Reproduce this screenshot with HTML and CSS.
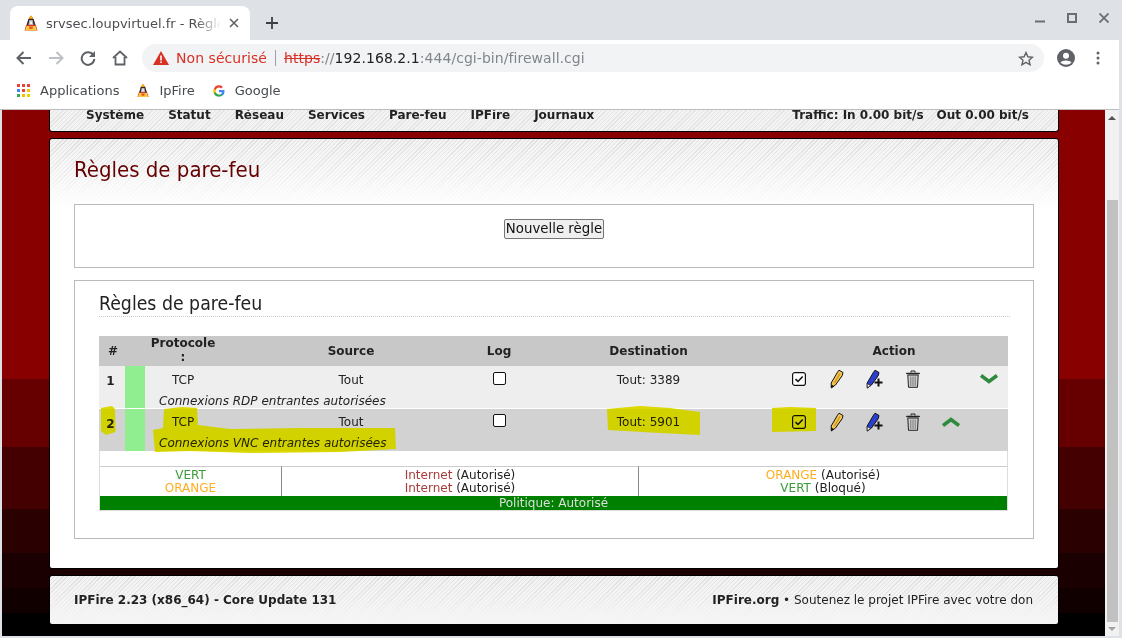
FILE: index.html
```html
<!DOCTYPE html>
<html lang="fr">
<head>
  <meta charset="UTF-8">
  <title>srvsec.loupvirtuel.fr - Règles de pare-feu</title>
  <link rel="stylesheet" href="styles.css">
</head>
<body>
  <svg class="defs" width="0" height="0">
    <symbol id="penguin" viewBox="0 0 14 16">
      <path d="M7 .5 9 3 10.500 7 12.500 12 13.500 15.500H.5L1.500 12 3.500 7 5 3Z" fill="#d8321c"/>
      <path d="M7 .5 9 3.500H5Z" fill="#f5c400"/>
      <path d="M4.300 4h5.400L11 10H3Z" fill="#2b2b30"/>
      <path d="M5.300 5h3.400L9.500 10H4.500Z" fill="#b9b8bc"/>
      <path d="M6 6.500h2V9H6Z" fill="#f6f3ee"/>
      <path d="M2.500 11h9L13 15.500H1Z" fill="#f6c744"/>
      <path d="M5 11.500h4L8.500 14h-3Z" fill="#e8541c"/>
    </symbol>
    <symbol id="pencil" viewBox="0 0 14 20">
      <path d="M9 1.200 13 3.500 12.300 6.500 5.500 16 1.300 19 1.200 14 7.500 3.200Z" fill="#f3c552" stroke="#111" stroke-width="1"/>
      <path d="M1.300 19 1.200 15.500 4 17Z" fill="#111"/>
      <path d="M10 4.500 4.500 14" stroke="#d2951f" stroke-width="1.400"/>
    </symbol>
    <symbol id="pencil-add" viewBox="0 0 18 20">
      <path d="M9 1.200 13 3.500 12.300 6.500 5.500 16 1.300 19 1.200 14 7.500 3.200Z" fill="#2a3fd0" stroke="#111" stroke-width="1"/>
      <path d="M1.300 19 1.200 14.500 4.500 16.500Z" fill="#fff" stroke="#111" stroke-width=".7"/>
      <path d="M12.500 9.500v8M8.500 13.500h8" stroke="#111" stroke-width="2"/>
    </symbol>
    <symbol id="trash" viewBox="0 0 14 18">
      <path d="M5 2.500V1h4v1.500" fill="none" stroke="#222"/>
      <path d="M.8 3.500h12.400" stroke="#222" stroke-width="1.500" stroke-linecap="round"/>
      <path d="M1.800 5h10.400l-.7 12.300H2.500Z" fill="#cfcfcf" stroke="#222"/>
      <path d="M4.800 6.500v9.500M7 6.500v9.500M9.200 6.500v9.500" stroke="#777"/>
    </symbol>
    <symbol id="tick" viewBox="0 0 14 14">
      <rect x=".6" y=".6" width="12.800" height="12.800" rx="2" fill="none" stroke="#111" stroke-width="1.200"/>
      <path d="M3.500 7.200 6 9.500 10.700 4.500" fill="none" stroke="#111" stroke-width="1.600"/>
    </symbol>
  </svg>

  <div class="tabstrip">
    <div class="tab">
      <svg class="favicon" width="14" height="16"><use href="#penguin"/></svg>
      <span class="tab-title">srvsec.loupvirtuel.fr - Règles de pare-feu</span>
      <svg class="tab-close" width="10" height="10" viewBox="0 0 10 10"><path d="M1 1 9 9M9 1 1 9" stroke="#5f6368" stroke-width="1.600"/></svg>
    </div>
    <svg class="new-tab" width="12" height="12" viewBox="0 0 12 12"><path d="M6 0v12M0 6h12" stroke="#3c4043" stroke-width="1.800"/></svg>
    <div class="win-btns">
      <svg width="10" height="10" viewBox="0 0 10 10"><path d="M0 8.500h10" stroke="#6a6d72" stroke-width="2"/></svg>
      <svg width="10" height="10" viewBox="0 0 10 10"><rect x="1" y="1" width="8" height="8" fill="none" stroke="#6a6d72" stroke-width="2"/></svg>
      <svg width="10" height="10" viewBox="0 0 10 10"><path d="M.5 .5l9 9M9.500 .5l-9 9" stroke="#6a6d72" stroke-width="1.800"/></svg>
    </div>
  </div>

  <div class="toolbar">
    <svg class="nav-icon" width="16" height="14" viewBox="0 0 16 14"><path d="M15 7H2M7.500 1 1.500 7l6 6" fill="none" stroke="#5f6368" stroke-width="2"/></svg>
    <svg class="nav-icon" width="16" height="14" viewBox="0 0 16 14"><path d="M1 7h13M8.500 1l6 6-6 6" fill="none" stroke="#bdc1c6" stroke-width="2"/></svg>
    <svg class="nav-icon" width="16" height="16" viewBox="0 0 16 16"><path d="M13.500 5.500A6.300 6.300 0 1 0 14.300 9" fill="none" stroke="#5f6368" stroke-width="2"/><path d="M15 1v6H9Z" fill="#5f6368"/></svg>
    <svg class="nav-icon" width="16" height="16" viewBox="0 0 16 16"><path d="M1 8 8 1.500 15 8M3.500 7v7.500h9V7" fill="none" stroke="#5f6368" stroke-width="1.800"/></svg>
    <div class="omnibox">
      <svg width="16" height="14" viewBox="0 0 16 14"><path d="M8 0 16 14H0Z" fill="#d93025"/><path d="M7.200 4.500h1.600v5H7.200ZM7.200 10.500h1.600V12H7.200Z" fill="#fff"/></svg>
      <span class="not-secure">Non sécurisé</span>
      <span class="omni-sep"></span>
      <span class="url"><s class="scheme">https</s>://<b class="host">192.168.2.1</b>:444/cgi-bin/firewall.cgi</span>
      <svg class="star" width="16" height="15" viewBox="0 0 16 15"><path d="M8 1.500 9.900 5.800 14.500 6.200 11 9.300 12.100 13.800 8 11.400 3.900 13.800 5 9.300 1.500 6.200 6.100 5.800Z" fill="none" stroke="#5f6368" stroke-width="1.400"/></svg>
    </div>
    <svg class="avatar" width="18" height="18" viewBox="0 0 18 18"><circle cx="9" cy="9" r="9" fill="#5f6368"/><circle cx="9" cy="6.800" r="3" fill="#fff"/><path d="M3.500 13.500C5 10.800 13 10.800 14.500 13.500 11.500 16.500 6.500 16.500 3.500 13.500Z" fill="#fff"/></svg>
    <svg class="kebab" width="4" height="14" viewBox="0 0 4 14"><circle cx="2" cy="2" r="1.500" fill="#5f6368"/><circle cx="2" cy="7" r="1.500" fill="#5f6368"/><circle cx="2" cy="12" r="1.500" fill="#5f6368"/></svg>
  </div>

  <div class="bookmarks">
    <div class="bookmark apps">
      <svg width="13" height="13" viewBox="0 0 13 13">
        <rect width="3" height="3" fill="#ea4335"/><rect x="5" width="3" height="3" fill="#ea4335"/><rect x="10" width="3" height="3" fill="#ea4335"/>
        <rect y="5" width="3" height="3" fill="#4285f4"/><rect x="5" y="5" width="3" height="3" fill="#ea4335"/><rect x="10" y="5" width="3" height="3" fill="#fbbc05"/>
        <rect y="10" width="3" height="3" fill="#34a853"/><rect x="5" y="10" width="3" height="3" fill="#fbbc05"/><rect x="10" y="10" width="3" height="3" fill="#e0d800"/>
      </svg>
      <span>Applications</span>
    </div>
    <div class="bookmark fire">
      <svg width="12" height="15"><use href="#penguin"/></svg>
      <span>IpFire</span>
    </div>
    <div class="bookmark google">
      <svg width="12" height="12" viewBox="0 0 48 48">
        <path d="M46 24.500c0-1.600-.1-3.100-.4-4.500H24v8.500h12.400c-.5 2.900-2.100 5.300-4.600 7v5.800h7.400C43.500 37.800 46 31.700 46 24.500Z" fill="#4285f4"/>
        <path d="M24 47c6.200 0 11.400-2 15.200-5.600l-7.400-5.800c-2 1.400-4.700 2.200-7.800 2.200-6 0-11-4-12.900-9.500H3.500v6A23 23 0 0 0 24 47Z" fill="#34a853"/>
        <path d="M11.100 28.300a13.800 13.800 0 0 1 0-8.700v-6H3.500a23 23 0 0 0 0 20.600Z" fill="#fbbc05"/>
        <path d="M24 10.100c3.400 0 6.400 1.200 8.800 3.400l6.600-6.600A23 23 0 0 0 3.500 13.600l7.600 6C13 14.100 18 10.100 24 10.100Z" fill="#ea4335"/>
      </svg>
      <span>Google</span>
    </div>
  </div>

  <div class="viewport">
    <div class="page">
      <div class="card nav-card">
        <ul class="menu">
          <li>Système</li>
          <li>Statut</li>
          <li>Réseau</li>
          <li>Services</li>
          <li>Pare-feu</li>
          <li>IPFire</li>
          <li>Journaux</li>
        </ul>
        <div class="traffic"><span>Traffic: In 0.00 bit/s</span><span>Out 0.00 bit/s</span></div>
      </div>

      <div class="card main-card">
        <h1>Règles de pare-feu</h1>
        <div class="box new-rule"><button type="button">Nouvelle règle</button></div>
        <div class="box rules-box">
          <h2>Règles de pare-feu</h2>
          <div class="rules-wrap">
            <table class="rules">
              <colgroup>
                <col class="c-num"><col class="c-color"><col class="c-proto"><col class="c-src"><col class="c-log"><col class="c-dst">
                <col class="c-act"><col class="c-act"><col class="c-act"><col class="c-act"><col class="c-act"><col class="c-act">
              </colgroup>
              <thead>
                <tr>
                  <th>#</th>
                  <th></th>
                  <th>Protocole<br>:</th>
                  <th>Source</th>
                  <th>Log</th>
                  <th>Destination</th>
                  <th colspan="6">Action</th>
                </tr>
              </thead>
              <tbody>
                <tr class="row-a">
                  <td class="num" rowspan="2">1</td>
                  <td class="zone" rowspan="2"></td>
                  <td>TCP</td>
                  <td>Tout</td>
                  <td><span class="check"></span></td>
                  <td>Tout: 3389</td>
                  <td><svg class="ic-tick" width="14" height="14"><use href="#tick"/></svg></td>
                  <td><svg width="14" height="20"><use href="#pencil"/></svg></td>
                  <td><svg width="18" height="20"><use href="#pencil-add"/></svg></td>
                  <td><svg width="14" height="18"><use href="#trash"/></svg></td>
                  <td></td>
                  <td><svg width="18" height="10" viewBox="0 0 18 10"><path d="M1 1.500 9 7.500 17 1.500" fill="none" stroke="#2e8b3d" stroke-width="3.600"/></svg></td>
                </tr>
                <tr class="row-a note-row">
                  <td class="note" colspan="10">Connexions RDP entrantes autorisées</td>
                </tr>
                <tr class="row-b">
                  <td class="num" rowspan="2">2</td>
                  <td class="zone" rowspan="2"></td>
                  <td>TCP</td>
                  <td>Tout</td>
                  <td><span class="check"></span></td>
                  <td>Tout: 5901</td>
                  <td><svg class="ic-tick" width="14" height="14"><use href="#tick"/></svg></td>
                  <td><svg width="14" height="20"><use href="#pencil"/></svg></td>
                  <td><svg width="18" height="20"><use href="#pencil-add"/></svg></td>
                  <td><svg width="14" height="18"><use href="#trash"/></svg></td>
                  <td><svg width="18" height="10" viewBox="0 0 18 10"><path d="M1 8.500 9 2.500 17 8.500" fill="none" stroke="#2e8b3d" stroke-width="3.600"/></svg></td>
                  <td></td>
                </tr>
                <tr class="row-b note-row">
                  <td class="note" colspan="10">Connexions VNC entrantes autorisées</td>
                </tr>
              </tbody>
            </table>

            <div class="gap"></div>

            <table class="summary">
              <colgroup><col class="s1"><col class="s2"><col class="s3"></colgroup>
              <tr>
                <td><span class="green">VERT</span><br><span class="orange">ORANGE</span></td>
                <td><span class="red">Internet</span> (Autorisé)<br><span class="red">Internet</span> (Autorisé)</td>
                <td><span class="orange">ORANGE</span> (Autorisé)<br><span class="green">VERT</span> (Bloqué)</td>
              </tr>
              <tr><td class="policy" colspan="3">Politique: Autorisé</td></tr>
            </table>

            <!-- marker strokes drawn on the screenshot, coordinates are page px -->
            <svg class="marker" width="909" height="130" viewBox="99 336 909 130">
              <path d="M101 408 112 406 115 409 115.500 432 106 435 101 431Z"/>
              <path d="M164 409 182 407 197 408 198 425 230 429 300 428 395 428 396 449 340 452 250 453 190 451 155 452 153 430 163 428Z"/>
              <path d="M607 409 640 406 670 408 700 412 700 435 660 433 625 431 608 430Z"/>
              <path d="M772 408 790 407 816 408 816 431 772 432Z"/>
            </svg>
          </div>
        </div>
      </div>

      <div class="card foot-card">
        <b>IPFire 2.23 (x86_64) - Core Update 131</b>
        <span><b>IPFire.org</b> • Soutenez le projet IPFire avec votre don</span>
      </div>
    </div>

    <div class="scrollbar">
      <span class="arrow-up"></span>
      <div class="track"><div class="thumb"></div></div>
      <span class="arrow-down"></span>
    </div>
  </div>
</body>
</html>
```

FILE: styles.css
```css
* {
  box-sizing: border-box;
}
html, body {
  margin: 0;
  padding: 0;
  height: 100%;
  overflow: hidden;
}
body {
  width: 1122px;
  height: 638px;
  background: #dee1e6;
  font-family: "DejaVu Sans", sans-serif;
  font-size: 12px;
  color: #222;
  display: flex;
  flex-direction: column;
}
.defs {
  position: absolute;
}

/* browser chrome */
.tabstrip {
  height: 40px;
  flex: none;
  display: flex;
  align-items: flex-end;
  padding-left: 10px;
  position: relative;
}
.tab {
  width: 240px;
  height: 34px;
  background: #fff;
  border-radius: 8px 8px 0 0;
  display: flex;
  align-items: center;
  padding: 0 11px 0 14px;
}
.favicon {
  flex: none;
}
.tab-title {
  font-size: 13px;
  color: #4b4e52;
  margin-left: 8px;
  width: 175px;
  overflow: hidden;
  white-space: nowrap;
  -webkit-mask-image: linear-gradient(90deg, #000 150px, transparent 175px);
}
.tab-close {
  margin-left: auto;
}
.new-tab {
  margin: 0 0 11px 16px;
}
.win-btns {
  margin: 0 13px 17px auto;
  display: flex;
  gap: 22px;
}
.toolbar {
  height: 38px;
  flex: none;
  margin-right: 3px;
  background: #fff;
  display: flex;
  align-items: center;
  padding: 0 0 2px 16px;
}
.nav-icon {
  margin-right: 16px;
}
.omnibox {
  width: 902px;
  height: 28px;
  margin-left: -2px;
  background: #f1f3f4;
  border-radius: 14px;
  display: flex;
  align-items: center;
  padding: 0 10px 0 11px;
  font-size: 14px;
  letter-spacing: .05px;
  white-space: nowrap;
}
.not-secure {
  color: #d93025;
  margin-left: 7px;
}
.omni-sep {
  width: 1px;
  height: 16px;
  background: #9aa0a6;
  margin: 0 8px 0 8px;
}
.url {
  color: #80868b;
}
.scheme {
  color: #d93025;
}
.host {
  font-weight: normal;
  color: #202124;
}
.star {
  margin-left: auto;
}
.avatar {
  margin-left: 13px;
}
.kebab {
  margin-left: 21px;
}
.bookmarks {
  height: 32px;
  flex: none;
  margin-right: 3px;
  background: #fff;
  border-bottom: 1px solid #bdbdbd;
  display: flex;
  align-items: center;
  padding: 0 0 6px 17px;
  font-size: 13px;
  color: #46494d;
}
.bookmark {
  display: flex;
  align-items: center;
}
.apps span {
  margin-left: 10px;
}
.fire {
  margin-left: 18px;
}
.fire span {
  margin-left: 10px;
}
.google {
  margin-left: 18px;
}
.google span {
  margin-left: 10px;
}

/* page area */
.viewport {
  height: 526px;
  flex: none;
  margin: 0 3px 0 2px;
  display: flex;
  overflow: hidden;
}
.page {
  width: 1103px;
  height: 526px;
  padding-left: 47px;
  background: linear-gradient(180deg,
    #880000 0, #880000 269px,
    #660000 269px, #660000 337px,
    #440000 337px, #440000 399px,
    #2a0000 399px, #2a0000 443px,
    #1a0000 443px, #1a0000 478px,
    #100000 478px, #100000 503px,
    #000 503px, #000 526px);
}
.card {
  width: 1010px;
  border: 1px solid #000;
  border-radius: 3px;
}
.nav-card {
  height: 22px;
  border-top: 0;
  border-radius: 0 0 3px 3px;
  padding: 0 29px 0 36px;
  display: flex;
  justify-content: space-between;
  font-weight: bold;
  line-height: 10px;
  color: #222;
  background: repeating-linear-gradient(135deg, #e4e4e4 0 1px, #f3f3f3 1px 3px);
}
.menu {
  list-style: none;
  margin: 0;
  padding: 0;
  display: flex;
  gap: 24px;
}
.traffic {
  display: flex;
  gap: 13px;
}
.main-card {
  height: 431px;
  margin-top: 6px;
  padding: 0 24px;
  background:
    linear-gradient(180deg, rgba(255,255,255,0) 0, #fff 70px),
    repeating-linear-gradient(135deg, #dedede 0 1px, #f3f3f3 1px 3px);
}
h1 {
  margin: 0;
  padding-top: 18px;
  height: 65px;
  font-family: "DejaVu Sans Condensed", "DejaVu Sans", sans-serif;
  font-size: 22px;
  line-height: 26px;
  font-weight: normal;
  color: #660000;
}
.box {
  width: 960px;
  background: #fff;
  border: 1px solid #bbb;
}
.new-rule {
  height: 64px;
  padding-top: 14px;
  text-align: center;
}
.new-rule button {
  height: 20px;
  padding: 0 1px;
  font-family: "DejaVu Sans", sans-serif;
  font-size: 13.333px;
  line-height: 16px;
  color: #111;
  background: #efefef;
  border: 1px solid #767676;
  border-radius: 2px;
}
.rules-box {
  height: 259px;
  margin-top: 12px;
  padding: 0 23px 0 24px;
}
h2 {
  margin: 0;
  padding-top: 12px;
  height: 36px;
  font-family: "DejaVu Sans Condensed", "DejaVu Sans", sans-serif;
  font-size: 19.300px;
  line-height: 22px;
  font-weight: normal;
  color: #222;
  border-bottom: 1px dotted #ccc;
}
.rules-wrap {
  position: relative;
  margin-top: 19px;
  width: 909px;
}
table {
  border-collapse: separate;
  border-spacing: 0;
  table-layout: fixed;
  width: 909px;
}
.c-num { width: 26px; }
.c-color { width: 20px; }
.c-proto { width: 76px; }
.c-src { width: 260px; }
.c-log { width: 36px; }
.c-dst { width: 263px; }
.c-act { width: 38px; }
.rules th {
  height: 30px;
  padding: 0;
  background: #c8c8c8;
  font-size: 12px;
  line-height: 14px;
  color: #222;
}
.rules th:first-child {
  padding-left: 2px;
}
.rules th:nth-child(3) {
  padding-bottom: 2px;
}
.rules td {
  height: 24px;
  padding: 3px 0 0;
  text-align: center;
  vertical-align: middle;
}
.rules td svg {
  display: block;
  margin: -1px auto 0;
}
.rules .note-row td {
  height: 18px;
  padding: 3px 0 0;
}
.rules .row-b td {
  height: 25px;
  padding-top: 2px;
}
.rules .row-b.note-row td {
  height: 18px;
  padding-top: 2px;
}
.rules td.note,
.rules .row-b.note-row td.note {
  text-align: left;
  padding-left: 14px;
  font-style: italic;
  white-space: nowrap;
}
.rules td.num,
.rules .row-b td.num {
  padding: 8px 3px 0 0;
  font-weight: bold;
  vertical-align: top;
}
.row-a td {
  background: #eee;
}
.row-b td {
  background: #d2d2d2;
}
.rules td.zone {
  background: #90ee90;
}
.row-b:not(.note-row) td {
  border-top: 1px solid #fff;
}
.check {
  display: block;
  width: 13px;
  height: 13px;
  margin: -3px auto 0;
  background: #fff;
  border: 1px solid #111;
  border-radius: 2px;
}
.ic-tick {
  background: #fff;
  border-radius: 2px;
}
.row-b .ic-tick {
  background: transparent;
}
.gap {
  height: 15px;
  border-left: 1px solid #ddd;
  border-right: 1px solid #ddd;
}
.summary {
  border: 1px solid #ddd;
  border-top: 0;
  font-size: 12px;
  line-height: 13px;
  text-align: center;
}
.s1 { width: 181px; }
.s2 { width: 357px; }
.s3 { width: 369px; }
.summary td {
  height: 30px;
  padding: 1px 0 0;
  border-top: 1px solid #ccc;
  border-left: 1px solid #888;
  color: #222;
}
.summary td:first-child {
  border-left: 0;
}
.summary td.policy {
  height: 14px;
  padding: 0;
  background: #008000;
  color: #ddd;
  border: 0;
  line-height: 14px;
}
.green { color: #3a9d3a; }
.orange { color: #ffad1f; }
.red { color: #a83c3c; }
.marker {
  position: absolute;
  left: 0;
  top: 0;
  overflow: visible;
  fill: #dcd800;
  mix-blend-mode: darken;
  pointer-events: none;
}
.foot-card {
  height: 50px;
  margin-top: 6px;
  padding: 0 25px 0 24px;
  display: flex;
  align-items: center;
  justify-content: space-between;
  color: #222;
  background:
    linear-gradient(180deg, rgba(245,245,245,0) 0, #f5f5f5 44px),
    repeating-linear-gradient(135deg, #dedede 0 1px, #f3f3f3 1px 3px);
}
.foot-card > b {
  color: #222;
}

/* scrollbar */
.scrollbar {
  width: 14px;
  flex: none;
  background: #f1f1f1;
  display: flex;
  flex-direction: column;
  align-items: center;
}
.arrow-up, .arrow-down {
  flex: none;
  width: 0;
  height: 0;
  border-left: 4px solid transparent;
  border-right: 4px solid transparent;
}
.arrow-up {
  margin: 6px 0 0;
  border-bottom: 4px solid #555;
}
.arrow-down {
  margin: 0 0 5px;
  border-top: 4px solid #a3a3a3;
}
.track {
  flex: 1;
  width: 100%;
  padding: 80px 1px 5px 2px;
}
.thumb {
  height: 100%;
  background: #c1c1c1;
}
```
